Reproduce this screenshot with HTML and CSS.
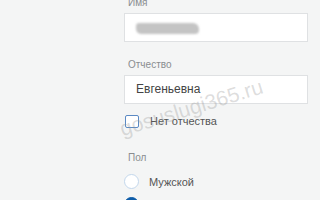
FILE: index.html
```html
<!DOCTYPE html>
<html lang="ru">
<head>
    <meta charset="UTF-8">
    <meta name="viewport" content="width=device-width, initial-scale=1.0">
    <title>Личные данные</title>
    <link rel="stylesheet" href="styles.css">
</head>
<body>
    <div class="form">
        <div class="form-group first">
            <label class="field-label">Имя</label>
            <div class="field-box"><span class="hidden-name"></span></div>
        </div>

        <div class="form-group">
            <label class="field-label">Отчество</label>
            <div class="field-box">Евгеньевна</div>
        </div>

        <div class="check-row">
            <span class="checkbox"></span>
            <span class="check-text">Нет отчества</span>
        </div>

        <div class="form-group gender">
            <label class="field-label">Пол</label>
            <div class="radio-row">
                <span class="radio"></span>
                <span class="radio-text">Мужской</span>
            </div>
            <div class="radio-row">
                <span class="radio checked"></span>
                <span class="radio-text">Женский</span>
            </div>
        </div>

        <div class="watermark">gosuslugi365.ru</div>
    </div>
</body>
</html>
```

FILE: styles.css
```css
body {
    margin: 0;
    background: #f4f5f5;
    font-family: 'Liberation Sans', Arial, sans-serif;
    height: 200px;
    overflow: hidden;
}
.form {
    position: relative;
    margin-left: 124px;
    width: 184px;
}
.form-group {
    margin-top: 16px;
}
.form-group.first {
    margin-top: -4px;
}
.field-label {
    display: block;
    padding-left: 4px;
    font-size: 10px;
    line-height: 14px;
    color: #8a8d90;
    margin-bottom: 3px;
}
.field-box {
    box-sizing: border-box;
    height: 29px;
    background: #fff;
    border: 1px solid #dfe1e3;
    padding-left: 11px;
    font-size: 12px;
    line-height: 27px;
    color: #444;
    display: flex;
    align-items: center;
}
.hidden-name {
    display: block;
    width: 63px;
    height: 11px;
    margin-top: 2px;
    background: #c4c4c4;
    border-radius: 3px 6px 4px 5px;
    filter: blur(1.2px);
}
.check-row {
    display: flex;
    align-items: center;
    margin-top: 10px;
    height: 14px;
}
.checkbox {
    box-sizing: border-box;
    width: 14px;
    height: 13px;
    margin-left: 1px;
    border: 1.5px solid #5b8ac4;
    border-radius: 2px;
    background: #fff;
}
.check-text {
    margin-left: 11px;
    font-size: 11px;
    color: #555;
}
.gender {
    margin-top: 23px;
}
.gender .field-label {
    margin-bottom: 9px;
}
.radio-row {
    display: flex;
    align-items: center;
    height: 15px;
    margin-bottom: 8px;
}
.radio {
    box-sizing: border-box;
    width: 15px;
    height: 15px;
    border: 1px solid #c3d7ec;
    border-radius: 50%;
    background: #fff;
}
.radio.checked {
    background: #0d5ca8;
    border-color: #0d5ca8;
}
.radio-text {
    margin-left: 10px;
    font-size: 11px;
    color: #555;
}
.watermark {
    position: absolute;
    left: 0;
    top: 121px;
    font-size: 21px;
    color: rgba(150, 150, 150, 0.32);
    transform: rotate(-17deg);
    transform-origin: left bottom;
    white-space: nowrap;
    pointer-events: none;
}
```
